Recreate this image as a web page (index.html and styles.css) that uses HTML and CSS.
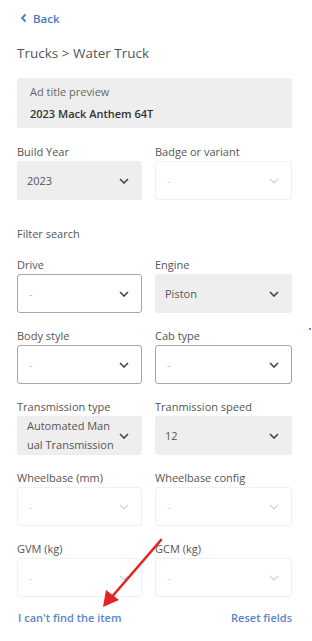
FILE: index.html
```html
<!DOCTYPE html>
<html>
<head>
<meta charset="utf-8">
<link rel="stylesheet" href="styles.css">
</head>
<body>
<div class="page">
  <a class="back"><svg class="back-ico" width="8" height="10" viewBox="0 0 8 10"><path d="M5.5 1.5 L2 5 L5.5 8.5" fill="none" stroke="#4a78c6" stroke-width="1.8"/></svg>Back</a>
  <div class="crumb">Trucks &gt; Water Truck</div>
  <div class="preview">
    <div class="preview-label">Ad title preview</div>
    <div class="preview-title">2023 Mack Anthem 64T</div>
  </div>

  <div class="grid first">
    <div class="field">
      <div class="label">Build Year</div>
      <div class="select filled"><span class="val">2023</span><svg class="chev" width="10" height="6" viewBox="0 0 10 6"><path d="M1 1 L5 5 L9 1" fill="none" stroke-width="1.6"/></svg></div>
    </div>
    <div class="field">
      <div class="label">Badge or variant</div>
      <div class="select disabled"><span class="val">-</span><svg class="chev" width="10" height="6" viewBox="0 0 10 6"><path d="M1 1 L5 5 L9 1" fill="none" stroke-width="1.2"/></svg></div>
    </div>
  </div>

  <div class="section">Filter search</div>

  <div class="grid">
    <div class="field">
      <div class="label">Drive</div>
      <div class="select active"><span class="val dash">-</span><svg class="chev" width="10" height="6" viewBox="0 0 10 6"><path d="M1 1 L5 5 L9 1" fill="none" stroke-width="1.6"/></svg></div>
    </div>
    <div class="field">
      <div class="label">Engine</div>
      <div class="select filled"><span class="val">Piston</span><svg class="chev" width="10" height="6" viewBox="0 0 10 6"><path d="M1 1 L5 5 L9 1" fill="none" stroke-width="1.6"/></svg></div>
    </div>
    <div class="field">
      <div class="label">Body style</div>
      <div class="select active"><span class="val dash">-</span><svg class="chev" width="10" height="6" viewBox="0 0 10 6"><path d="M1 1 L5 5 L9 1" fill="none" stroke-width="1.6"/></svg></div>
    </div>
    <div class="field">
      <div class="label">Cab type</div>
      <div class="select active"><span class="val dash">-</span><svg class="chev" width="10" height="6" viewBox="0 0 10 6"><path d="M1 1 L5 5 L9 1" fill="none" stroke-width="1.6"/></svg></div>
    </div>
    <div class="field">
      <div class="label">Transmission type</div>
      <div class="select filled"><span class="val two">Automated Man<br>ual Transmission</span><svg class="chev" width="10" height="6" viewBox="0 0 10 6"><path d="M1 1 L5 5 L9 1" fill="none" stroke-width="1.6"/></svg></div>
    </div>
    <div class="field">
      <div class="label">Tranmission speed</div>
      <div class="select filled"><span class="val">12</span><svg class="chev" width="10" height="6" viewBox="0 0 10 6"><path d="M1 1 L5 5 L9 1" fill="none" stroke-width="1.6"/></svg></div>
    </div>
    <div class="field">
      <div class="label">Wheelbase (mm)</div>
      <div class="select disabled"><span class="val">-</span><svg class="chev" width="10" height="6" viewBox="0 0 10 6"><path d="M1 1 L5 5 L9 1" fill="none" stroke-width="1.2"/></svg></div>
    </div>
    <div class="field">
      <div class="label">Wheelbase config</div>
      <div class="select disabled"><span class="val">-</span><svg class="chev" width="10" height="6" viewBox="0 0 10 6"><path d="M1 1 L5 5 L9 1" fill="none" stroke-width="1.2"/></svg></div>
    </div>
    <div class="field">
      <div class="label">GVM (kg)</div>
      <div class="select disabled"><span class="val">-</span><svg class="chev" width="10" height="6" viewBox="0 0 10 6"><path d="M1 1 L5 5 L9 1" fill="none" stroke-width="1.2"/></svg></div>
    </div>
    <div class="field">
      <div class="label">GCM (kg)</div>
      <div class="select disabled"><span class="val">-</span><svg class="chev" width="10" height="6" viewBox="0 0 10 6"><path d="M1 1 L5 5 L9 1" fill="none" stroke-width="1.2"/></svg></div>
    </div>
  </div>

  <div class="links">
    <a class="link">I can't find the item</a>
    <a class="link">Reset fields</a>
  </div>
</div>
<span class="dot"></span>
<svg class="arrow" width="312" height="641" viewBox="0 0 312 641">
  <line x1="161" y1="540" x2="110" y2="599" stroke="#e42323" stroke-width="2.6" stroke-linecap="round"/>
  <polygon points="103,607 106,590 119,600" fill="#e42323"/>
</svg>
</body>
</html>
```

FILE: styles.css
```css
html, body {
  margin: 0;
  padding: 0;
  background: #ffffff;
}
body {
  font-family: "Open Sans", "Noto Sans", sans-serif;
  color: #555555;
  position: relative;
  width: 312px;
  height: 641px;
  overflow: hidden;
}
.page {
  padding: 9px 20px 0 17px;
}
.back {
  display: flex;
  align-items: center;
  gap: 5px;
  height: 18px;
  padding-left: 3px;
  font-size: 11.5px;
  font-weight: 600;
  color: #4a78c6;
}
.crumb {
  margin-top: 16px;
  height: 20px;
  line-height: 20px;
  font-size: 13.5px;
  color: #555555;
}
.preview {
  margin-top: 15px;
  height: 50px;
  box-sizing: border-box;
  background: #eeeeee;
  border-radius: 3px;
  padding: 6px 13px 0;
}
.preview-label {
  font-size: 11px;
  line-height: 16px;
  color: #666666;
}
.preview-title {
  margin-top: 6px;
  font-size: 11px;
  line-height: 16px;
  font-weight: 600;
  color: #333333;
}
.grid {
  display: grid;
  grid-template-columns: 125px 137px;
  column-gap: 13px;
  row-gap: 14px;
}
.grid.first {
  margin-top: 15px;
}
.label {
  height: 18px;
  line-height: 18px;
  font-size: 11px;
  color: #555555;
  white-space: nowrap;
}
.select {
  height: 39px;
  box-sizing: border-box;
  border-radius: 3px;
  display: flex;
  align-items: center;
  justify-content: space-between;
  padding: 0 13px 0 10px;
  font-size: 11px;
}
.select .chev {
  flex: none;
}
.select.filled {
  background: #eeeeee;
  color: #555555;
}
.select.filled .chev path,
.select.active .chev path {
  stroke: #444444;
}
.select.active {
  border: 1px solid #a6a6a6;
  padding-left: 9px;
  padding-right: 12px;
}
.select.disabled {
  border: 1px solid #f1f1f1;
  padding-left: 9px;
  padding-right: 12px;
  color: #d6d6d6;
}
.select.disabled .chev path {
  stroke: #d2d2d2;
}
.val.dash {
  color: #bbbbbb;
  padding-left: 2px;
}
.select.disabled .val {
  padding-left: 2px;
}
.val.two {
  line-height: 19px;
  padding-top: 1px;
  margin-top: -2px;
}
.section {
  margin-top: 25px;
  margin-bottom: 13px;
  height: 18px;
  line-height: 18px;
  font-size: 11px;
  color: #555555;
}
.links {
  margin-top: 12px;
  display: flex;
  justify-content: space-between;
  height: 18px;
  line-height: 18px;
  font-size: 11px;
  font-weight: 600;
}
.link {
  color: #5a86c8;
  padding-left: 1px;
}
.dot {
  position: absolute;
  left: 309px;
  top: 328px;
  width: 2px;
  height: 2px;
  border-radius: 1px;
  background: #3a5bd0;
}
.arrow {
  position: absolute;
  left: 0;
  top: 0;
  pointer-events: none;
}
```
